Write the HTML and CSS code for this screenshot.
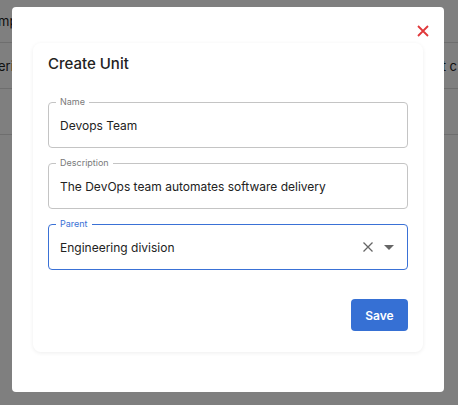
FILE: index.html
```html
<!DOCTYPE html>
<html lang="en">
<head>
<meta charset="utf-8">
<title>Create Unit</title>
<link rel="stylesheet" href="styles.css">
</head>
<body>
<div class="page">
  <div class="row"><span class="cell-left">mpany</span></div>
  <div class="row"><span class="cell-left">ering</span><span class="cell-right">ct c</span></div>
  <div class="row"></div>
</div>
<div class="backdrop">
  <div class="modal" role="dialog" aria-label="Create Unit">
    <div class="modal-head">
      <button class="close" aria-label="Close">
        <svg width="12" height="12" viewBox="0 0 12 12"><path d="M1 1L11 11M11 1L1 11" stroke="#e0383a" stroke-width="1.8" fill="none"/></svg>
      </button>
    </div>
    <div class="card">
      <h2 class="title">Create Unit</h2>
      <div class="fields">
        <div class="field">
          <span class="label">Name</span>
          <span class="value">Devops Team</span>
        </div>
        <div class="field">
          <span class="label">Description</span>
          <span class="value">The DevOps team automates software delivery</span>
        </div>
        <div class="field focused">
          <span class="label">Parent</span>
          <span class="value">Engineering division</span>
          <span class="adorn">
            <svg class="clear" width="12" height="12" viewBox="0 0 12 12"><path d="M1.5 1.5L10.5 10.5M10.5 1.5L1.5 10.5" stroke="#666" stroke-width="1.3" fill="none"/></svg>
            <svg class="caret" width="10" height="5" viewBox="0 0 10 5"><path d="M0 0H10L5 5Z" fill="#666"/></svg>
          </span>
        </div>
      </div>
      <div class="actions">
        <button class="save">Save</button>
      </div>
    </div>
  </div>
</div>
</body>
</html>
```
FILE: styles.css
```css
html, body {
  margin: 0;
  padding: 0;
  width: 458px;
  height: 405px;
  overflow: hidden;
  font-family: Inter, "Noto Sans", sans-serif;
  background: #ffffff;
}
.page {
  display: flex;
  flex-direction: column;
}
.row {
  height: 45px;
  border-bottom: 1px solid #dcdcdc;
  display: flex;
  align-items: center;
  justify-content: space-between;
  font-size: 13px;
  color: #222;
  white-space: nowrap;
}
.row:first-child { height: 42px; }
.cell-left { margin-left: -2px; }
.cell-right { margin-right: 1px; }
.backdrop {
  position: fixed;
  inset: 0;
  background: rgba(0, 0, 0, 0.5);
  display: flex;
  justify-content: flex-start;
  align-items: flex-start;
  padding: 7px 0 0 12px;
}
.modal {
  width: 432px;
  height: 385px;
  box-sizing: border-box;
  background: #fff;
  border-radius: 4px;
  padding: 0 21px;
}
.modal-head {
  height: 36px;
  display: flex;
  justify-content: flex-end;
  align-items: flex-end;
}
.close {
  border: 0;
  background: none;
  padding: 0;
  width: 14px;
  height: 14px;
  display: flex;
  align-items: center;
  justify-content: center;
  margin-right: -7px;
  margin-bottom: 5px;
  cursor: pointer;
}
.card {
  height: 309px;
  box-sizing: border-box;
  border-radius: 8px;
  box-shadow: 0 1px 4px rgba(0, 0, 0, 0.07);
  padding: 9px 15px 21px;
  display: flex;
  flex-direction: column;
}
.title {
  margin: 0;
  font-size: 15px;
  font-weight: 500;
  color: #222;
  line-height: 24px;
}
.fields {
  margin-top: 26px;
  display: flex;
  flex-direction: column;
  gap: 15px;
}
.field {
  position: relative;
  height: 46px;
  box-sizing: border-box;
  border: 1px solid #c4c4c4;
  border-radius: 4px;
  display: flex;
  align-items: center;
  padding: 0 11px;
}
.field.focused {
  border-color: #3a71d6;
}
.label {
  position: absolute;
  top: -7px;
  left: 7px;
  padding: 0 4px;
  background: #fff;
  font-size: 9px;
  line-height: 12px;
  color: #7a7a7a;
}
.focused .label { color: #3a71d6; }
.value {
  font-size: 12px;
  color: #222;
  flex: 1;
}
.adorn {
  display: flex;
  align-items: center;
  gap: 10px;
  margin-right: 2px;
}
.actions {
  margin-top: auto;
  display: flex;
  justify-content: flex-end;
}
.save {
  width: 57px;
  height: 32px;
  border: 0;
  border-radius: 4px;
  background: #3670d4;
  color: #fff;
  font-family: Inter, "Noto Sans", sans-serif;
  font-size: 12px;
  font-weight: 600;
  cursor: pointer;
}
```
